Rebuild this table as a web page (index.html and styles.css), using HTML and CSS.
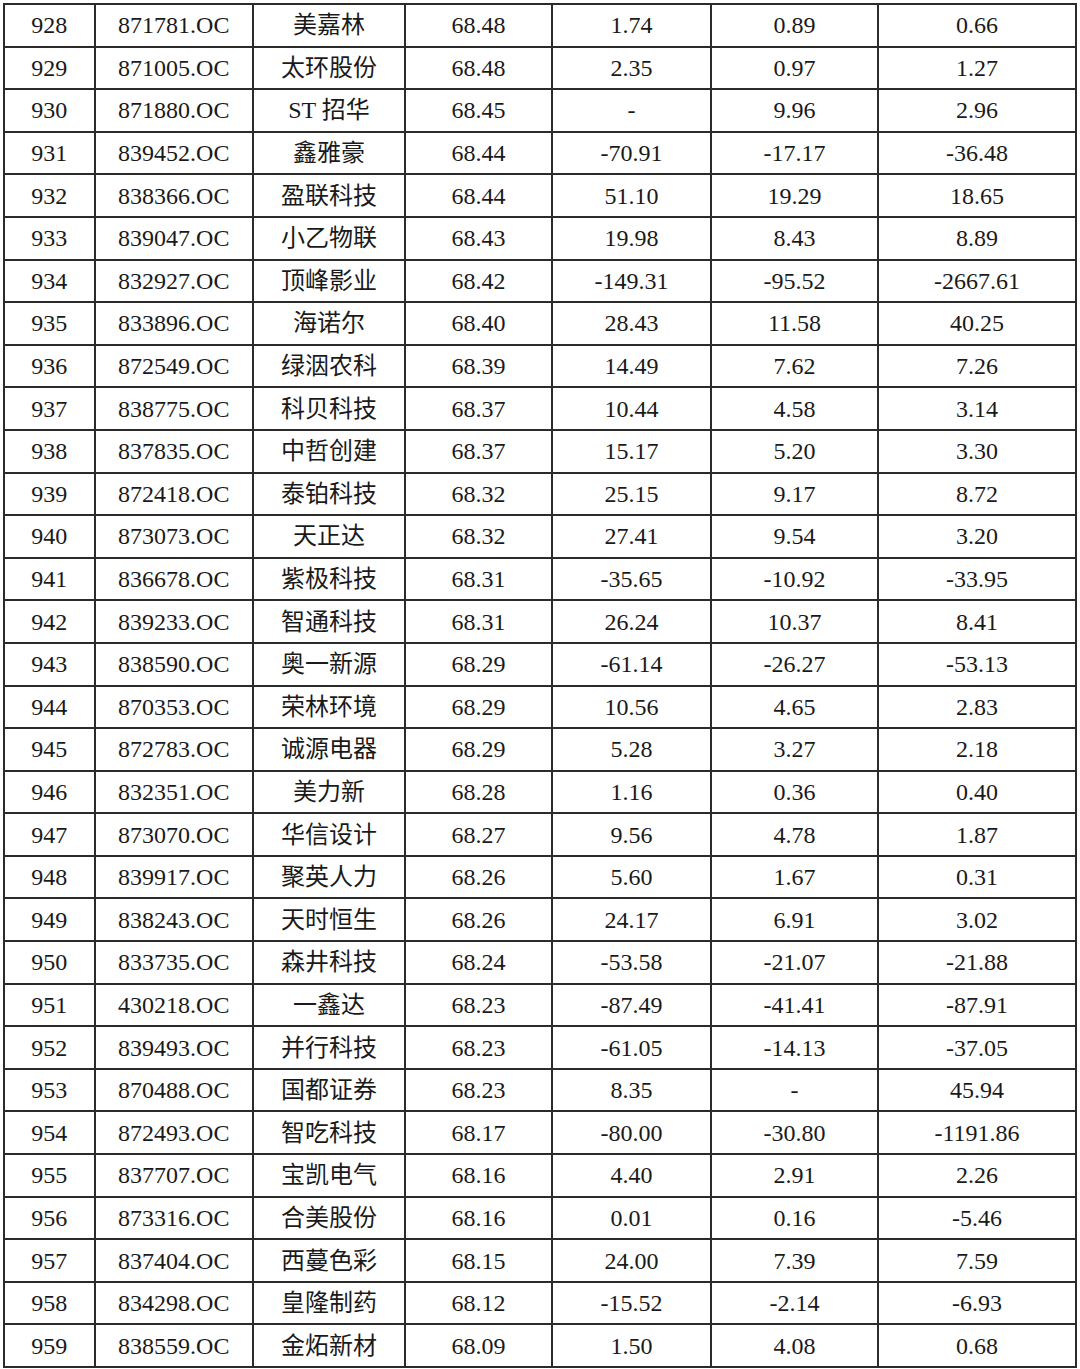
FILE: index.html
```html
<!DOCTYPE html>
<html lang="zh">
<head>
<meta charset="utf-8">
<link rel="stylesheet" href="styles.css">
</head>
<body>
<table class="data">
<colgroup>
<col class="c1"><col class="c2"><col class="c3"><col class="c4"><col class="c5"><col class="c6"><col class="c7">
</colgroup>
<tbody>
<tr><td>928</td><td>871781.OC</td><td>美嘉林</td><td>68.48</td><td>1.74</td><td>0.89</td><td>0.66</td></tr>
<tr><td>929</td><td>871005.OC</td><td>太环股份</td><td>68.48</td><td>2.35</td><td>0.97</td><td>1.27</td></tr>
<tr><td>930</td><td>871880.OC</td><td>ST 招华</td><td>68.45</td><td>-</td><td>9.96</td><td>2.96</td></tr>
<tr><td>931</td><td>839452.OC</td><td>鑫雅豪</td><td>68.44</td><td>-70.91</td><td>-17.17</td><td>-36.48</td></tr>
<tr><td>932</td><td>838366.OC</td><td>盈联科技</td><td>68.44</td><td>51.10</td><td>19.29</td><td>18.65</td></tr>
<tr><td>933</td><td>839047.OC</td><td>小乙物联</td><td>68.43</td><td>19.98</td><td>8.43</td><td>8.89</td></tr>
<tr><td>934</td><td>832927.OC</td><td>顶峰影业</td><td>68.42</td><td>-149.31</td><td>-95.52</td><td>-2667.61</td></tr>
<tr><td>935</td><td>833896.OC</td><td>海诺尔</td><td>68.40</td><td>28.43</td><td>11.58</td><td>40.25</td></tr>
<tr><td>936</td><td>872549.OC</td><td>绿洇农科</td><td>68.39</td><td>14.49</td><td>7.62</td><td>7.26</td></tr>
<tr><td>937</td><td>838775.OC</td><td>科贝科技</td><td>68.37</td><td>10.44</td><td>4.58</td><td>3.14</td></tr>
<tr><td>938</td><td>837835.OC</td><td>中哲创建</td><td>68.37</td><td>15.17</td><td>5.20</td><td>3.30</td></tr>
<tr><td>939</td><td>872418.OC</td><td>泰铂科技</td><td>68.32</td><td>25.15</td><td>9.17</td><td>8.72</td></tr>
<tr><td>940</td><td>873073.OC</td><td>天正达</td><td>68.32</td><td>27.41</td><td>9.54</td><td>3.20</td></tr>
<tr><td>941</td><td>836678.OC</td><td>紫极科技</td><td>68.31</td><td>-35.65</td><td>-10.92</td><td>-33.95</td></tr>
<tr><td>942</td><td>839233.OC</td><td>智通科技</td><td>68.31</td><td>26.24</td><td>10.37</td><td>8.41</td></tr>
<tr><td>943</td><td>838590.OC</td><td>奥一新源</td><td>68.29</td><td>-61.14</td><td>-26.27</td><td>-53.13</td></tr>
<tr><td>944</td><td>870353.OC</td><td>荣林环境</td><td>68.29</td><td>10.56</td><td>4.65</td><td>2.83</td></tr>
<tr><td>945</td><td>872783.OC</td><td>诚源电器</td><td>68.29</td><td>5.28</td><td>3.27</td><td>2.18</td></tr>
<tr><td>946</td><td>832351.OC</td><td>美力新</td><td>68.28</td><td>1.16</td><td>0.36</td><td>0.40</td></tr>
<tr><td>947</td><td>873070.OC</td><td>华信设计</td><td>68.27</td><td>9.56</td><td>4.78</td><td>1.87</td></tr>
<tr><td>948</td><td>839917.OC</td><td>聚英人力</td><td>68.26</td><td>5.60</td><td>1.67</td><td>0.31</td></tr>
<tr><td>949</td><td>838243.OC</td><td>天时恒生</td><td>68.26</td><td>24.17</td><td>6.91</td><td>3.02</td></tr>
<tr><td>950</td><td>833735.OC</td><td>森井科技</td><td>68.24</td><td>-53.58</td><td>-21.07</td><td>-21.88</td></tr>
<tr><td>951</td><td>430218.OC</td><td>一鑫达</td><td>68.23</td><td>-87.49</td><td>-41.41</td><td>-87.91</td></tr>
<tr><td>952</td><td>839493.OC</td><td>并行科技</td><td>68.23</td><td>-61.05</td><td>-14.13</td><td>-37.05</td></tr>
<tr><td>953</td><td>870488.OC</td><td>国都证券</td><td>68.23</td><td>8.35</td><td>-</td><td>45.94</td></tr>
<tr><td>954</td><td>872493.OC</td><td>智吃科技</td><td>68.17</td><td>-80.00</td><td>-30.80</td><td>-1191.86</td></tr>
<tr><td>955</td><td>837707.OC</td><td>宝凯电气</td><td>68.16</td><td>4.40</td><td>2.91</td><td>2.26</td></tr>
<tr><td>956</td><td>873316.OC</td><td>合美股份</td><td>68.16</td><td>0.01</td><td>0.16</td><td>-5.46</td></tr>
<tr><td>957</td><td>837404.OC</td><td>西蔓色彩</td><td>68.15</td><td>24.00</td><td>7.39</td><td>7.59</td></tr>
<tr><td>958</td><td>834298.OC</td><td>皇隆制药</td><td>68.12</td><td>-15.52</td><td>-2.14</td><td>-6.93</td></tr>
<tr><td>959</td><td>838559.OC</td><td>金炻新材</td><td>68.09</td><td>1.50</td><td>4.08</td><td>0.68</td></tr>
</tbody>
</table>
</body>
</html>
```
FILE: styles.css
```css
html, body {
  margin: 0;
  padding: 0;
  background: #ffffff;
}

body {
  padding: 3px 0 0 3px;
  font-family: "Liberation Serif", "Noto Sans CJK SC", serif;
  color: #1a1a1a;
}

.data {
  border-collapse: collapse;
  table-layout: fixed;
  width: 1074px;
  font-size: 24px;
}

.data td {
  border: 2px solid #2b2b2b;
  height: 40.6px;
  padding: 0;
  text-align: center;
  vertical-align: middle;
  line-height: 1;
  white-space: nowrap;
}

.c1 { width: 90.5px; }
.c2 { width: 158.5px; }
.c3 { width: 152px; }
.c4 { width: 147px; }
.c5 { width: 159px; }
.c6 { width: 167px; }
.c7 { width: 198px; }
```
